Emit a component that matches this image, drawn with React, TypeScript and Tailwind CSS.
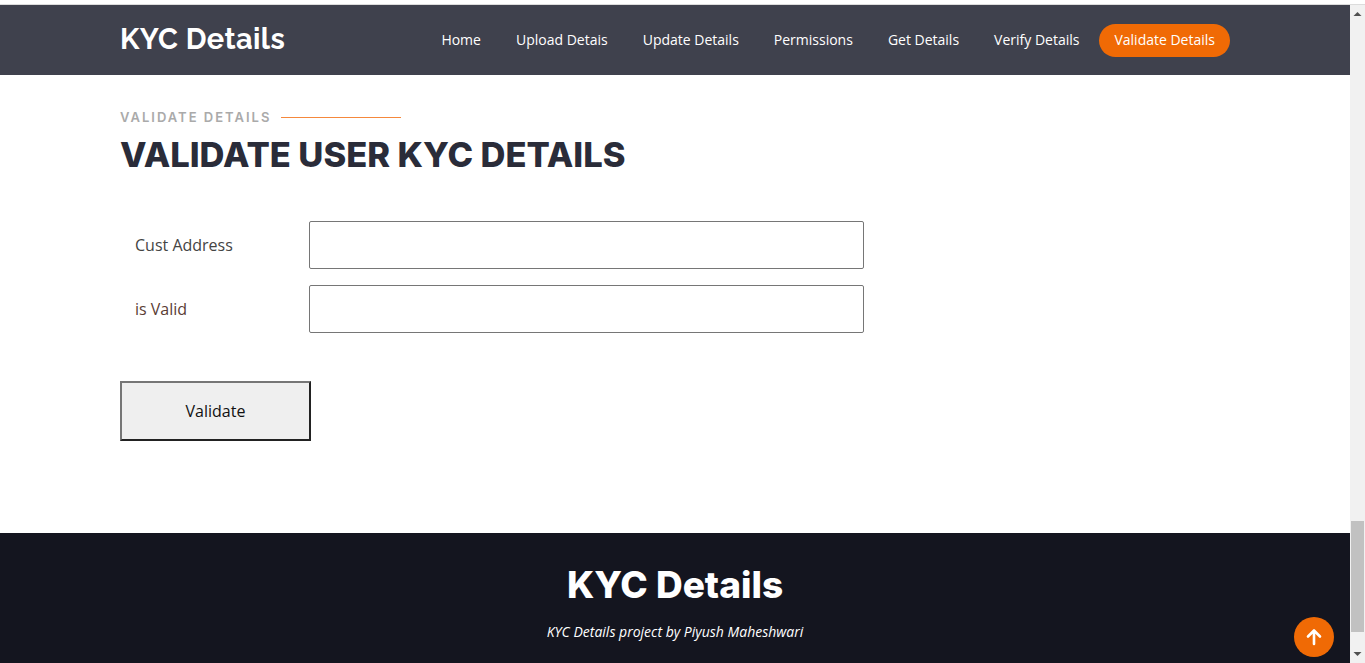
import React from "react";

const navItems = ["Home", "Upload Detais", "Update Details", "Permissions", "Get Details", "Verify Details"];

export default function App() {
  return (
    <div className="w-[1365px] h-[663px] overflow-hidden bg-white flex flex-col" style={{ fontFamily: '"Open Sans", sans-serif' }}>
      <div className="h-[5px] shrink-0 bg-white border-b border-[#dcdcdc]" />
      <div className="flex flex-1 min-h-0">
        <div className="w-[1350px] flex flex-col">
          {/* Header */}
          <header className="h-[70px] shrink-0 bg-[#3f414d]">
            <div className="w-[1110px] mx-auto h-full flex items-center justify-between">
              <div className="text-white text-[29px] font-bold tracking-[0.4px]" style={{ fontFamily: 'Raleway, Inter, sans-serif' }}>
                KYC Details
              </div>
              <nav className="flex items-center">
                {navItems.map((n) => (
                  <a key={n} className="ml-[5px] px-[15px] pt-[6px] pb-[8px] text-white text-[14px] font-medium leading-[17px]">
                    {n}
                  </a>
                ))}
                <a className="ml-[5px] px-[15px] h-[33px] pb-[2px] flex items-center rounded-full bg-[#f06a05] text-white text-[14px] font-medium">
                  Validate Details
                </a>
              </nav>
            </div>
          </header>

          {/* Content */}
          <main className="h-[458px] shrink-0">
            <div className="w-[1110px] mx-auto pt-[34px]">
              <div className="flex items-center">
                <span className="text-[13px] font-semibold tracking-[2px] text-[#aaaaaa] uppercase leading-[16px]" style={{ fontFamily: 'Inter, sans-serif' }}>
                  Validate Details
                </span>
                <span className="ml-[10px] w-[120px] h-px bg-[#f5883c]" />
              </div>
              <h2 className="mt-[8px] text-[34.5px] font-extrabold leading-[44px] text-[#2a2c39] uppercase" style={{ fontFamily: 'Inter, sans-serif' }}>
                Validate User KYC Details
              </h2>
              <div className="mt-[44px] flex flex-col gap-[16px]">
                <div className="flex items-center">
                  <label className="w-[189px] pl-[15px] text-[16px] text-[#444444]">Cust Address</label>
                  <div className="w-[555px] h-[48px] border border-[#767676] rounded-[2px]" />
                </div>
                <div className="flex items-center">
                  <label className="w-[189px] pl-[15px] text-[16px] text-[#5a3d35]">is Valid</label>
                  <div className="w-[555px] h-[48px] border border-[#767676] rounded-[2px]" />
                </div>
              </div>
              <button className="mt-[48px] w-[191px] h-[60px] bg-[#efefef] border-2 border-t-[#767676] border-l-[#767676] border-b-[#222222] border-r-[#222222] text-[16px] text-[#111]">
                Validate
              </button>
            </div>
          </main>

          {/* Footer */}
          <footer className="flex-1 bg-[#14151f] relative">
            <div className="flex flex-col items-center pt-[29px]">
              <div className="text-white text-[37px] font-extrabold leading-[46px]" style={{ fontFamily: 'Inter, sans-serif' }}>
                KYC Details
              </div>
              <div className="mt-[13px] text-white text-[14px] italic">KYC Details project by Piyush Maheshwari</div>
            </div>
            <div className="absolute left-[1294px] top-[84px] w-[40px] h-[40px] rounded-full bg-[#f06a05] flex items-center justify-center">
              <svg width="20" height="20" viewBox="0 0 20 20" fill="none" stroke="white" strokeWidth="2.6" strokeLinecap="round" strokeLinejoin="round">
                <path d="M10 17V4M4 9.5L10 3.5L16 9.5" />
              </svg>
            </div>
          </footer>
        </div>

        {/* Scrollbar */}
        <div className="w-[15px] bg-[#f1f1f1] flex flex-col items-center">
          <svg width="15" height="17" viewBox="0 0 15 17" className="shrink-0">
            <path d="M3.5 11L7.5 7L11.5 11Z" fill="#505050" />
          </svg>
          <div className="mt-[499px] w-[13px] h-[111px] bg-[#c1c1c1]" />
          <div className="flex-1" />
          <svg width="15" height="17" viewBox="0 0 15 17" className="shrink-0">
            <path d="M3.5 6L7.5 10L11.5 6Z" fill="#505050" />
          </svg>
        </div>
      </div>
    </div>
  );
}
